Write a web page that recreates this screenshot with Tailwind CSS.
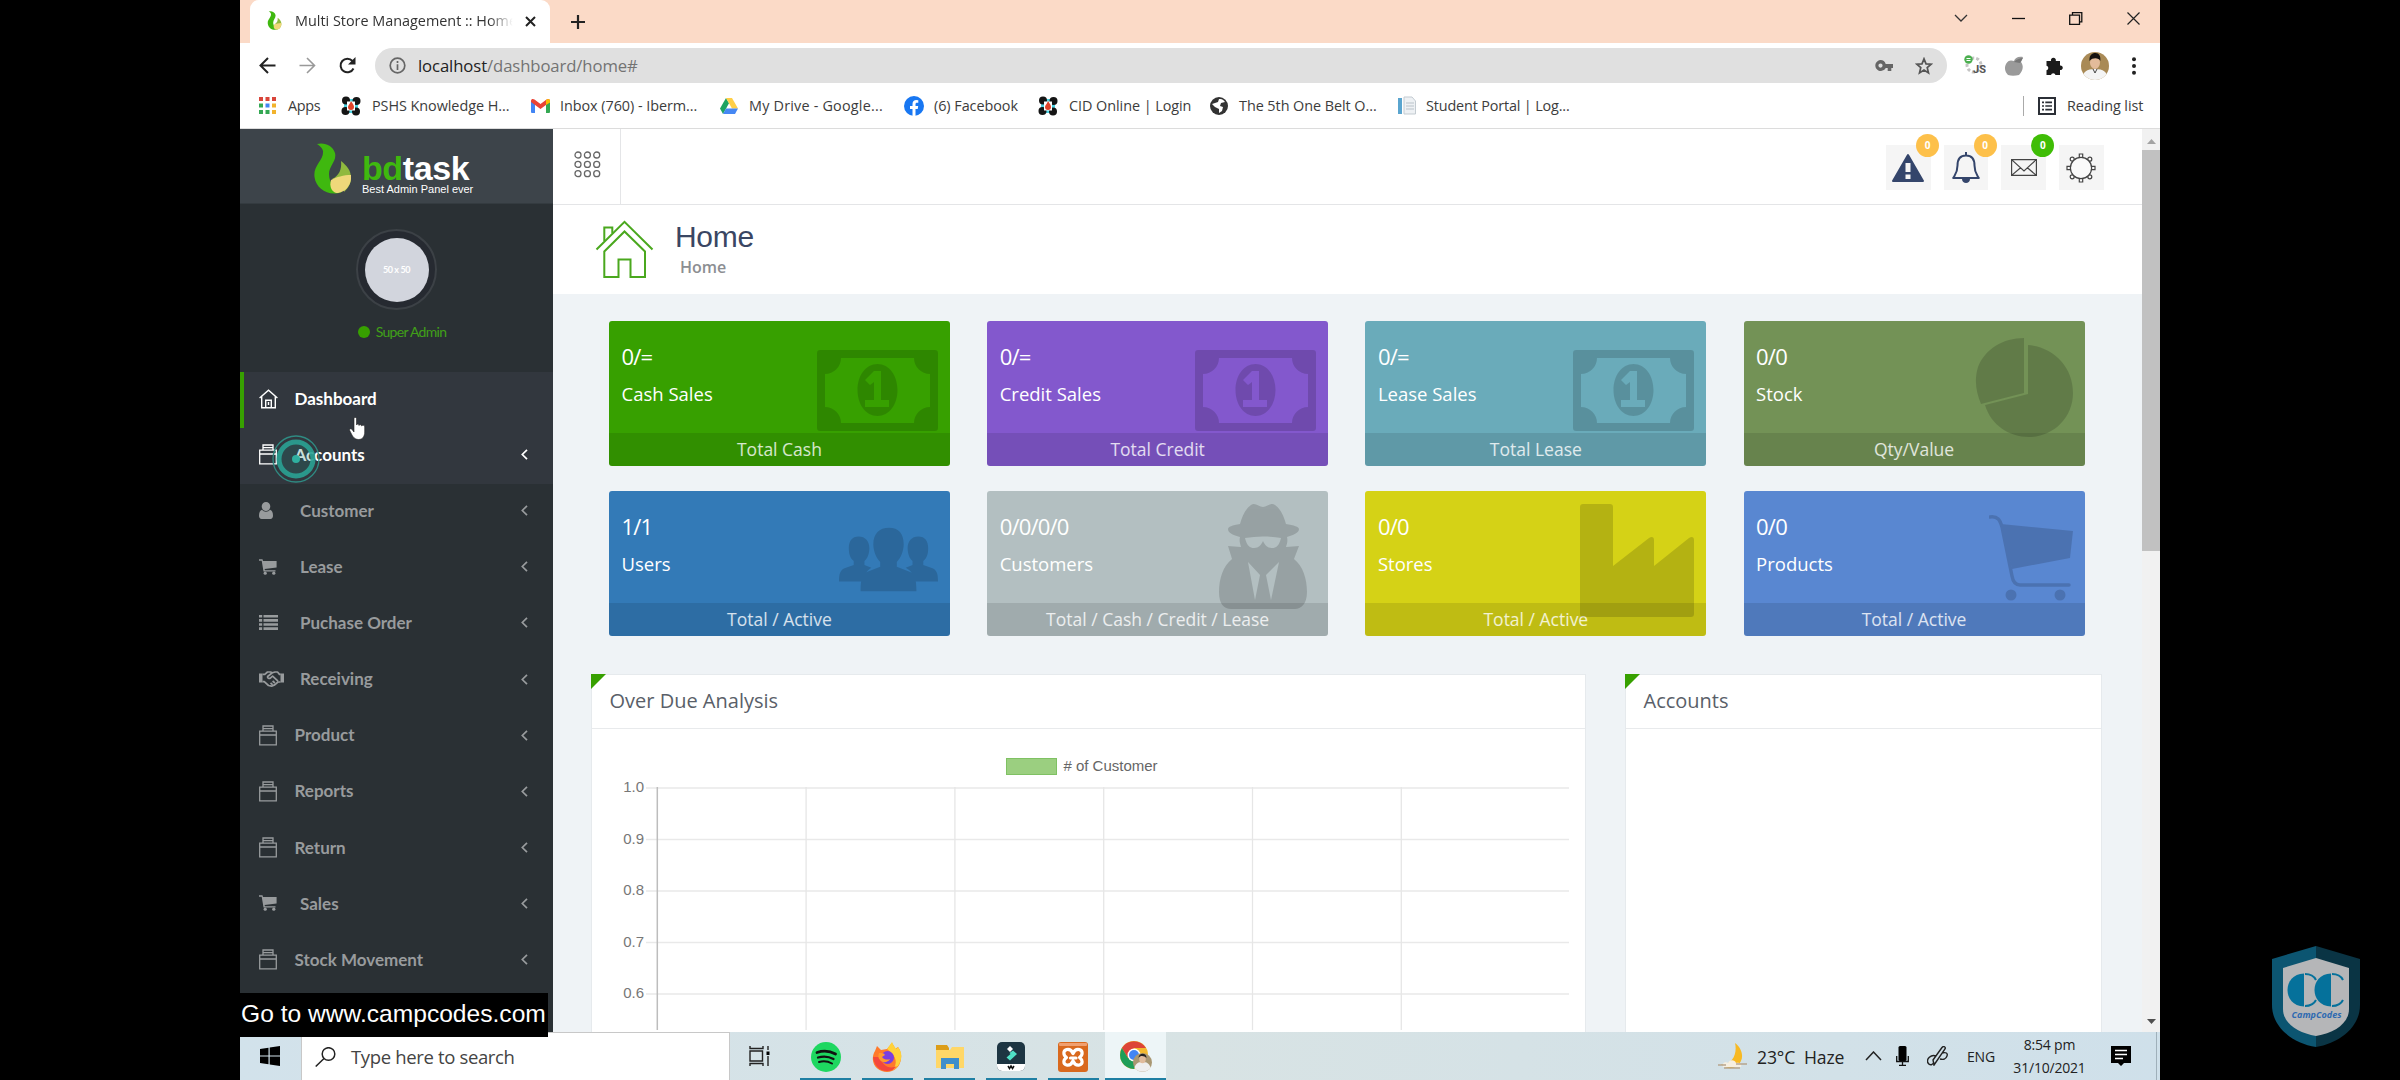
<!DOCTYPE html>
<html lang="en">
<head>
<meta charset="utf-8">
<title>Multi Store Management :: Home</title>
<script src="https://cdn.jsdelivr.net/npm/@tailwindcss/browser@4"></script>
</head>
<body class="bg-black">
<!-- shared symbols -->
<svg class="hidden">
  <symbol id="flame" viewBox="0 0 37 51"><path d="M3 1c8-2 16 2 18 9 2 8-6 13-6 21 0 9 6 16 13 18C15 54 2 46 .5 34-1 22 10 17 9 8 8.500 5 6 3 3 1z" fill="#3fb80f"/><path d="M27 18c6 5 10 9 10 17 0 6-3 10-7 14 0-7-3-12-12-13 7-3 10-10 9-18z" fill="#8fb93e"/><path d="M17 37c5-3 13-5 20-5 1 8-4 17-13 18-6 0-9-6-7-13z" fill="#efd87a"/></symbol>
  <symbol id="bag" viewBox="0 0 18 21"><g fill="none" stroke="currentColor" stroke-width="1.300"><path d="M.7 6.200h16.600v13.600H.7zM.7 10h16.600M4 6.200V1h10v5.200M4 3.700h10"/></g></symbol>
  <symbol id="house" viewBox="0 0 19 20"><g fill="none" stroke="currentColor" stroke-width="1.400"><path d="M.6 9 9.500 1.200 18.400 9M2.700 7.500v11.300h13.600V7.500M6.700 18.500v-7.200h5.600v7.200M9.500 13v3"/></g></symbol>
  <symbol id="person" viewBox="0 0 14 17"><path fill="currentColor" d="M7 0a4.300 4.300 0 0 1 4.300 4.300C11.300 7 9.500 9 7 9S2.700 7 2.700 4.300A4.300 4.300 0 0 1 7 0zM3 7.800C4 9 5.400 9.800 7 9.800S10 9 11 7.800c2 .4 3 3 3 6 0 2-1 3.200-2.600 3.200H2.600C1 17 0 15.800 0 13.800c0-3 1-5.600 3-6z"/></symbol>
  <symbol id="cartS" viewBox="0 0 18 16"><path fill="currentColor" d="M0 .3h3.500l.5 1.800h13.600v6.300L5.600 10l.3 1.200h10.600v1.400H4.500L2.700 1.700H0z"/><circle fill="currentColor" cx="6.200" cy="14.200" r="1.600"/><circle fill="currentColor" cx="14.800" cy="14.200" r="1.600"/></symbol>
  <symbol id="list" viewBox="0 0 19 15"><path fill="currentColor" d="M0 0h3.200v2.600H0zM4.500 0H19v2.600H4.500zM0 4.100h3.200v2.600H0zM4.500 4.100H19v2.600H4.500zM0 8.200h3.200v2.600H0zM4.500 8.200H19v2.600H4.500zM0 12.300h3.200V15H0zM4.500 12.300H19V15H4.500z"/></symbol>
  <symbol id="shake" viewBox="0 0 25 16"><path fill="currentColor" d="M0 2.500h3.500v9H0zM21.500 2.500H25v9h-3.500z"/><g fill="none" stroke="currentColor" stroke-width="1.700" stroke-linejoin="round"><path d="M3.500 3.400h2.300L8.500 1h3l2 .8L16 1h2.500l2 2.400h1.200M3.500 10.700h1.800l4.200 3.800 3 .6 3.200-1.200 3.300-2.900h2.500M13 2 8.600 5.500c-.5 1.800 1.700 2.500 3 1.300l2-1.600 5.400 5M11.500 12l2 1.600M13.600 10l2.300 2"/></g></symbol>
  <symbol id="chev" viewBox="0 0 7 11"><path d="M6 .8 1.300 5.500 6 10.200" fill="none" stroke="currentColor" stroke-width="1.700"/></symbol>
  <symbol id="money" viewBox="0 0 121 81"><path fill-rule="evenodd" d="M3 0h115a3 3 0 0 1 3 3v75a3 3 0 0 1-3 3H3a3 3 0 0 1-3-3V3a3 3 0 0 1 3-3zM24 8A16 16 0 0 1 8 24v33a16 16 0 0 1 16 16h73a16 16 0 0 1 16-16V24A16 16 0 0 1 97 8zM60.500 14c12 0 20 12 20 26s-8 26-20 26-20-12-20-26 8-26 20-26zM57 21l-9 9 5 5 4-3v18h-9v7h24v-7h-8V21z"/></symbol>
  <symbol id="pie" viewBox="0 0 98 99"><path d="M49 0v55L6 66C1 54-1 42 3 29 10 11 28 0 49 0zM53 7c26 2 45 22 45 48 0 25-20 44-44 44-20 0-38-12-44-32l43-11z"/></symbol>
  <symbol id="group" viewBox="0 0 101 65"><path d="M20 9c7 0 11 5 11 12 0 5-2 11-5 13v4l7 3c-5 3-7 7-7 13v1H0c0-8 1-12 7-14l8-3v-4c-4-3-5-8-5-13 0-7 3-12 10-12zM81 9c7 0 10 5 10 12 0 5-1 10-5 13v4l8 3c6 2 7 6 7 14H76c0-7-2-11-8-14l7-3v-4c-3-2-5-8-5-13 0-7 4-12 11-12z"/><path d="M51 0c10 0 15 6 15 17 0 7-3 14-7 18v5l13 5c5 2 7 6 7 20H22c0-14 2-18 7-20l13-5v-5c-4-4-7-11-7-18C35 6 41 0 51 0z"/></symbol>
  <symbol id="spy" viewBox="0 0 89 105"><path fill-rule="evenodd" d="M32 1c4-3 8 2 12 2s8-5 12-2c6 4 9 12 11 19 8 1 13 3 13 5 0 4-6 6-12 8 1 4 0 7-1 10l13-1-5 13c9 7 13 20 13 33 0 12-6 17-12 17H12C5 105 0 100 0 88c0-13 4-26 13-33L9 42l13 1c-1-4-2-6-1-10-7-2-12-4-12-8 0-2 4-4 12-5 2-7 5-15 11-19zM26 34c2 8 5 10 9 10 5 0 7-3 9-7 2 4 4 7 9 7 4 0 7-2 9-10-12-2-24-2-36 0zM29 58l7 38 5-25zM60 58l-8 38-5-25z"/></symbol>
  <symbol id="factory" viewBox="0 0 114 113"><path d="M3 0h27a3 3 0 0 1 3 3v59l36-28c3-2 5-1 5 2v26l35-28c3-2 5-1 5 2v74a3 3 0 0 1-3 3H3a3 3 0 0 1-3-3V3a3 3 0 0 1 3-3z"/></symbol>
  <symbol id="cartL" viewBox="0 0 84 86"><path d="M12 9 84 16l-3 27-58 11z"/><path d="M1 2c8-1 10 3 12 10l10 49c1 6 3 9 8 9h49" fill="none" stroke="#000" stroke-width="3.500" stroke-linecap="round"/><circle cx="22" cy="80" r="5.500"/><circle cx="71" cy="80" r="5.500"/></symbol>
  <symbol id="dost" viewBox="0 0 20 20"><g fill="#4fd4e4"><rect x="3" y="3" width="14" height="14"/></g><g fill="#151515"><circle cx="5" cy="4.500" r="4"/><circle cx="15.500" cy="5" r="4"/><circle cx="4.500" cy="15" r="4"/><circle cx="15" cy="15.500" r="4"/></g><path fill="#fff" d="M6 5.500h8v9H6z"/><path fill="#e0432a" d="M10 5c2 3 3 4 3 6s-1 3-3 3-3-1-3-3 2-3 3-6z"/></symbol>
</svg>

<div class="relative ml-[240px] w-[1920px] h-[1080px] flex flex-col overflow-hidden bg-white font-['Open_Sans',sans-serif]">

  <!-- tab strip -->
  <div class="h-[43px] shrink-0 bg-[#fbdac7] flex items-center pl-[10px]">
    <div class="w-[300px] h-[43px] bg-white rounded-t-[9px] flex items-center pl-[17px] pr-[14px]">
      <svg class="w-[15px] h-[19px] shrink-0 -mt-0.5"><use href="#flame"/></svg>
      <div class="ml-[13px] w-[220px] shrink-0 overflow-hidden whitespace-nowrap text-[14.400px] pb-0.5 text-[#333] [mask-image:linear-gradient(to_right,#000_88%,transparent_99%)]">Multi Store Management :: Home</div>
      <svg class="ml-[10px] w-[11px] h-[11px] shrink-0" viewBox="0 0 11 11"><path d="M1 1l9 9M10 1l-9 9" stroke="#222" stroke-width="2"/></svg>
    </div>
    <svg class="ml-[20px] w-[16px] h-[16px]" viewBox="0 0 16 16"><path d="M8 1v14M1 8h14" stroke="#222" stroke-width="2.200"/></svg>
    <div class="ml-auto flex items-center pr-[20px] pb-[6px] gap-[44px]">
      <svg class="w-[14px] h-[13px]" viewBox="0 0 14 13"><path d="M1 3l6 6 6-6" fill="none" stroke="#333" stroke-width="1.300"/></svg>
      <svg class="w-[13px] h-[13px]" viewBox="0 0 13 13"><path d="M0 6.500h13" stroke="#111" stroke-width="1.300"/></svg>
      <svg class="w-[14px] h-[13px]" viewBox="0 0 14 13"><path d="M.7 3.200h9.800v9.100H.7zM3.500 3V.7h9.300v9.100h-2.300" fill="none" stroke="#111" stroke-width="1.300"/></svg>
      <svg class="w-[13px] h-[13px]" viewBox="0 0 13 13"><path d="M.5.500l12 12M12.500.500l-12 12" stroke="#222" stroke-width="1.200"/></svg>
    </div>
  </div>

  <!-- toolbar -->
  <div class="h-[45px] shrink-0 flex items-center pl-[19px] pr-[20px]">
    <svg class="w-[17px] h-[17px]" viewBox="0 0 17 17"><path d="M16.500 8.500H2M9 1 1.500 8.500 9 16" fill="none" stroke="#222" stroke-width="2"/></svg>
    <svg class="ml-[23px] w-[17px] h-[17px]" viewBox="0 0 17 17"><path d="M.5 8.500H15M8 1l7.500 7.500L8 16" fill="none" stroke="#999" stroke-width="1.600"/></svg>
    <svg class="ml-[23px] w-[17px] h-[17px]" viewBox="0 0 17 17"><path d="M14.500 11.500A6.800 6.800 0 1 1 13.500 4" fill="none" stroke="#222" stroke-width="2"/><path d="M16.500 0v7.500H9z" fill="#222"/></svg>
    <div class="ml-[19px] w-[1572px] h-[35px] rounded-full bg-[#e0e0e0] flex items-center pl-[14px] pr-[14px]">
      <svg class="w-[17px] h-[17px]" viewBox="0 0 17 17"><circle cx="8.500" cy="8.500" r="7.300" fill="none" stroke="#666" stroke-width="1.700"/><path d="M8.500 7.300V13M8.500 4v2" stroke="#666" stroke-width="1.700"/></svg>
      <div class="ml-[12px] text-[16.700px] tracking-[-0.1px] text-[#737373]"><span class="text-[#222]">localhost</span>/dashboard/home#</div>
      <svg class="ml-auto w-[18px] h-[12px]" viewBox="0 0 18 12"><path fill="#666" fill-rule="evenodd" d="M5.500 0a5.500 5.500 0 0 1 5.200 4H18v4h-1.700v3h-3.600V8h-2A5.500 5.500 0 1 1 5.500 0zm0 3.500a2 2 0 1 0 0 4.200 2 2 0 0 0 0-4.200z"/></svg>
      <svg class="ml-[22px] w-[18px] h-[18px]" viewBox="0 0 24 24"><path fill="none" stroke="#555" stroke-width="2.300" d="m12 2.500 2.700 6.600 7 .5-5.400 4.600 1.700 7L12 17.400l-6 3.800 1.700-7L2.300 9.600l7-.5z"/></svg>
    </div>
    <svg class="ml-[17px] w-[22px] h-[21px]" viewBox="0 0 22 21"><circle cx="10" cy="10" r="7" fill="none" stroke="#c4c4c4" stroke-width="3" stroke-dasharray="3 2"/><circle cx="4.500" cy="4.500" r="4.200" fill="#4caf50"/><path d="M2.500 5.500h4M2.500 3.500h4" stroke="#fff"/><text x="9" y="18" font-family="Roboto" font-weight="700" font-size="11" fill="#555">JS</text></svg>
    <svg class="ml-[19px] w-[19px] h-[20px]" viewBox="0 0 19 20"><path fill="#9a9a9a" d="M1 8c2-4 5-4 8-3 1-3 4-5 9-4l-2 5c3 4 2 9-2 13-4 1-8 1-11 0C0 16-1 12 1 8z"/><path fill="#777" d="M9 6c3-3 6-4 9-4l-3 5z"/></svg>
    <svg class="ml-[21px] w-[19px] h-[18px]" viewBox="0 0 19 18"><path fill="#1b1b1b" d="M1.500 4H6a2.500 2.500 0 1 1 4.800 0H15v4.500a2.300 2.300 0 1 1 0 4.500v5H10.500a2.300 2.300 0 0 0-4.500 0H1.500v-4.800a2.300 2.300 0 0 0 0-4.500z"/></svg>
    <svg class="ml-[17px] w-[28px] h-[28px]" viewBox="0 0 28 28"><defs><clipPath id="av"><circle cx="14" cy="14" r="14"/></clipPath></defs><g clip-path="url(#av)"><rect width="28" height="28" fill="#a98a56"/><path d="M1 28c0-8 5-11 13-11s13 3 13 11z" fill="#f4f4f4"/><ellipse cx="14" cy="10.500" rx="5" ry="6.500" fill="#e3bb9a"/><path d="M8.500 9C8 2 12 1 14.500 1 18 1 20 4 19.300 9 18 6 12 5 8.500 9z" fill="#16120f"/><path d="M12 17l2 4 2-4" stroke="#444" fill="none"/></g></svg>
    <svg class="ml-auto mr-[4px] w-[4px] h-[18px]" viewBox="0 0 4 18"><g fill="#222"><circle cx="2" cy="2.200" r="2"/><circle cx="2" cy="9" r="2"/><circle cx="2" cy="15.800" r="2"/></g></svg>
  </div>

  <!-- bookmarks -->
  <div class="h-[41px] pb-[5px] shrink-0 flex items-center pl-[19px] pr-[17px] border-b border-[#dcdcdc] text-[14.400px] tracking-[-0.05px] text-[#3c3c3c] whitespace-nowrap">
    <svg class="w-[17px] h-[17px]" viewBox="0 0 17 17"><path fill="#d9453a" d="M0 0h4v4H0zM6.500 0h4v4h-4zM13 0h4v4h-4z"/><path fill="#34a853" d="M0 6.500h4v4H0zM0 13h4v4H0zM6.500 13h4v4h-4z"/><path fill="#4285f4" d="M6.500 6.500h4v4h-4z"/><path fill="#f2b32c" d="M13 6.500h4v4h-4zM13 13h4v4h-4z"/></svg>
    <span class="ml-[12px] w-[53px] tracking-[-0.3px]">Apps</span>
    <svg class="w-[20px] h-[20px]"><use href="#dost"/></svg>
    <span class="ml-[11px] w-[159px]">PSHS Knowledge H...</span>
    <svg class="w-[19px] h-[14px]" viewBox="0 0 19 14"><path fill="#4285f4" d="M0 2h4v12H1a1 1 0 0 1-1-1z"/><path fill="#34a853" d="M15 2h4v11a1 1 0 0 1-1 1h-3z"/><path fill="#ea4335" d="M0 2C0 0 2-.5 3.500.600L9.500 5l6-4.400C17 -.5 19 0 19 2v1L9.500 10 0 3z"/><path fill="#fbbc04" d="M15 1l1.500-.8C18-.2 19 .5 19 2v1.500L15 6z"/></svg>
    <span class="ml-[10px] w-[160px]">Inbox (760) - Iberm...</span>
    <svg class="w-[18px] h-[16px]" viewBox="0 0 18 16"><path fill="#1ea362" d="M6 0 0 10.500 3 16 9 5.300z"/><path fill="#ffcf48" d="M6 0h6l6 10.500h-6z"/><path fill="#4688f4" d="M3 16h12l3-5.500H6z"/></svg>
    <span class="ml-[11px] w-[155px] tracking-[0.2px]">My Drive - Google...</span>
    <svg class="w-[20px] h-[20px]" viewBox="0 0 20 20"><circle cx="10" cy="10" r="10" fill="#1877f2"/><path fill="#fff" d="M8.500 20v-7H6v-3h2.500V8c0-2.600 1.500-4 3.800-4l2 .2v2.500h-1.200c-1.300 0-1.600.7-1.600 1.600V10h2.700l-.5 3h-2.200v7z"/></svg>
    <span class="ml-[10px] w-[104px]">(6) Facebook</span>
    <svg class="w-[20px] h-[20px]"><use href="#dost"/></svg>
    <span class="ml-[11px] w-[141px]">CID Online | Login</span>
    <svg class="w-[18px] h-[18px]" viewBox="0 0 18 18"><circle cx="9" cy="9" r="9" fill="#333"/><path fill="#fff" d="M9 2c3-.5 5 1 6 3l-4 1-1 3 3 1-1 4-3 2 0-4-4-2-3-3 3-1 3-1z"/></svg>
    <span class="ml-[11px] w-[159px]">The 5th One Belt O...</span>
    <svg class="w-[18px] h-[19px]" viewBox="0 0 18 19"><path fill="#5aa5cf" d="M0 2h4v16H0z"/><path fill="#eef1f4" stroke="#c3cbd1" d="M6 1h8l3.500 4v13H6z"/><path stroke="#b9c2c9" d="M8 7h8M8 10h8M8 13h8"/></svg>
    <span class="ml-[10px] tracking-[-0.15px]">Student Portal | Log...</span>
    <div class="ml-auto w-px h-[20px] bg-[#aaa]"></div>
    <svg class="ml-[14px] w-[18px] h-[18px]" viewBox="0 0 18 18"><path fill="none" stroke="#2b2f36" stroke-width="2" d="M1 1h16v16H1z"/><path stroke="#2b2f36" stroke-width="1.700" d="M4 5.300h2M7.300 5.300H14M4 9h2M7.300 9H14M4 12.700h2M7.300 12.700H14"/></svg>
    <span class="ml-[11px] w-[76px]">Reading list</span>
  </div>

  <!-- page -->
  <div class="h-[903px] shrink-0 flex">
    <!-- sidebar -->
    <aside class="w-[313px] shrink-0 bg-[#2a3034] flex flex-col font-['Lato',sans-serif]">
      <div class="h-[75px] shrink-0 bg-[#3d444a] flex items-start pl-[74px] pt-[14px] border-b border-[#343b40]">
        <svg class="w-[37px] h-[51px]"><use href="#flame"/></svg>
        <div class="ml-[11px] pt-[8px] font-['Liberation_Sans',sans-serif] text-white whitespace-nowrap">
          <div class="text-[34px] leading-[34px] font-bold tracking-[-0.4px]"><span class="text-[#3fb80f]">bd</span>task</div>
          <div class="text-[11px] leading-[13px] -mt-[2px] font-medium">Best Admin Panel ever</div>
        </div>
      </div>
      <div class="h-[168px] shrink-0 flex flex-col items-center pt-[25px]">
        <div class="size-[81px] rounded-full border-2 border-[#3c4146] bg-[#262a31] flex items-center justify-center">
          <div class="size-[64px] rounded-full bg-[#d2d5dd] flex items-center justify-center text-white text-[9px] font-bold tracking-[-0.4px]">50 x 50</div>
        </div>
        <div class="mt-[11px] flex items-center gap-[6px] pl-[11px] text-[14px] leading-[22px] tracking-[-0.7px] text-[#41a018]"><span class="size-[12px] rounded-full bg-[#37a000]"></span><span>Super Admin</span></div>
      </div>
      <nav id="menu"></nav>
    </aside>

    <!-- main -->
    <main class="grow min-w-0 bg-[#eff3f6] flex flex-col">
      <div class="h-[76px] shrink-0 bg-white border-b border-[#e4e5e7] flex">
        <div class="w-[68px] border-r border-[#e4e5e7] flex items-start pl-[20.500px] pt-[22px]">
          <svg class="w-[27px] h-[27px]" viewBox="0 0 27 27"><g fill="none" stroke="#666" stroke-width="1.300"><circle cx="4" cy="4" r="3"/><circle cx="13.400" cy="4" r="3"/><circle cx="22.700" cy="4" r="3"/><circle cx="4" cy="13.400" r="3"/><circle cx="13.400" cy="13.400" r="3"/><circle cx="22.700" cy="13.400" r="3"/><circle cx="4" cy="22.700" r="3"/><circle cx="13.400" cy="22.700" r="3"/><circle cx="22.700" cy="22.700" r="3"/></g></svg>
        </div>
        <div class="ml-auto mr-[38.500px] pt-[16px] flex gap-[13px]">
          <div class="relative w-[44.600px] h-[45px] bg-[#f5f5f5] flex items-center justify-center">
            <svg class="w-[32px] h-[30px]" viewBox="0 0 32 30"><path fill="#34456b" stroke="#34456b" stroke-width="2" stroke-linejoin="round" d="M16 2 31 28H1z"/><path fill="#f5f5f5" d="M13.500 10h5v9h-5zM13.500 21.500h5v4.500h-5z"/></svg>
            <span class="absolute -top-[11px] left-[30px] size-[23px] rounded-full bg-[#fdc04a] text-white text-[10px] font-bold flex items-center justify-center">0</span>
          </div>
          <div class="relative w-[44.600px] h-[45px] bg-[#f5f5f5] flex items-center justify-center">
            <svg class="w-[28px] h-[31px]" viewBox="0 0 28 31"><path fill="none" stroke="#34456b" stroke-width="2" stroke-linejoin="round" d="M14 3.500c-6 0-8.500 4-8.500 10 0 7-2 8.500-4.300 12.500h25.600c-2.300-4-4.300-5.500-4.300-12.500 0-6-2.500-10-8.500-10zM14 0v3.500"/><path fill="#34456b" d="M10 27h8c0 2.500-2 4-4 4s-4-1.500-4-4z"/></svg>
            <span class="absolute -top-[11px] left-[30px] size-[23px] rounded-full bg-[#fdc04a] text-white text-[10px] font-bold flex items-center justify-center">0</span>
          </div>
          <div class="relative w-[44.600px] h-[45px] bg-[#f5f5f5] flex items-center justify-center">
            <svg class="w-[26px] h-[17px]" viewBox="0 0 26 17"><g fill="none" stroke="#444" stroke-width="1.200"><path d="M.6.600h24.800v15.800H.6zM.6.600 13 12 25.400.600M.6 16.400l9-7.600M25.400 16.400l-9-7.600"/></g></svg>
            <span class="absolute -top-[11px] left-[30px] size-[23px] rounded-full bg-[#3fbd06] text-white text-[10px] font-bold flex items-center justify-center">0</span>
          </div>
          <div class="w-[44.600px] h-[45px] bg-[#f5f5f5] flex items-center justify-center">
            <svg class="w-[30px] h-[30px]" viewBox="0 0 30 30"><g fill="#fafafa" stroke="#444" stroke-width="1.200"><path d="M13.300 5V1h3.400v4M13.300 25v4h3.400v-4M5 13.300H1v3.400h4M25 13.300h4v3.400h-4"/><circle cx="6.200" cy="6.200" r="2"/><circle cx="23.800" cy="6.200" r="2"/><circle cx="6.200" cy="23.800" r="2"/><circle cx="23.800" cy="23.800" r="2"/><circle cx="15" cy="15" r="10.600"/></g></svg>
          </div>
        </div>
      </div>
      <div class="h-[89px] shrink-0 bg-white flex pl-[42px] pt-[15px]">
        <svg class="w-[59px] h-[60px]" viewBox="0 0 59 60"><g fill="none" stroke="#4aa81e" stroke-width="2"><path d="M1.500 29.500 29.500 1.800l28 27.700"/><path d="M9.300 21V7.500h8v5.800"/><path d="M9.300 57V31.500L29.500 11.500 50 31.500V57H35.500V39.500h-12V57z"/></g></svg>
        <div class="ml-[21px]">
          <div class="mt-[-1px] h-[36px] font-['Liberation_Sans',sans-serif] text-[30px] leading-[36px] tracking-[-0.3px] text-[#3a4663]">Home</div>
          <div class="ml-[5px] text-[16px] leading-[24px] font-semibold text-[#8c8e92]">Home</div>
        </div>
      </div>
      <div id="cards" class="mt-[27px] ml-[56px] w-[1475.500px] grid grid-cols-4 gap-x-[37.300px] gap-y-[25px] shrink-0"></div>

      <div class="mt-[38px] ml-[37.500px] flex gap-[39px] grow items-stretch">
        <section class="relative w-[995px] bg-white border border-b-0 border-[#e6eaed]">
          <div class="absolute -left-px -top-px border-t-[15px] border-t-[#37a000] border-r-[15px] border-r-transparent"></div>
          <h4 class="h-[54px] border-b border-[#e8eaec] flex items-center pl-[18px] pb-[2px] text-[20px] text-[#5a5f69]">Over Due Analysis</h4>
          <div class="h-[38px] flex items-end justify-center pr-[12px] gap-[6px] font-['Liberation_Sans',sans-serif] text-[15px] text-[#666]">
            <span class="w-[51px] h-[17px] mb-[-8px] bg-[#9bcf80] border border-[#7fc163]"></span><span class="leading-[17px] mb-[-7px]"># of Customer</span>
          </div>
          <svg class="block w-[990px] h-[263px]" viewBox="0 0 990 263" id="chart"></svg>
        </section>
        <section class="relative w-[477px] bg-white border border-b-0 border-[#e6eaed]">
          <div class="absolute -left-px -top-px border-t-[15px] border-t-[#37a000] border-r-[15px] border-r-transparent"></div>
          <h4 class="h-[54px] border-b border-[#e8eaec] flex items-center pl-[18px] pb-[2px] text-[20px] text-[#5a5f69]">Accounts</h4>
        </section>
      </div>
    </main>

    <!-- scrollbar -->
    <div class="w-[18px] shrink-0 bg-[#f1f1f1] flex flex-col items-center">
      <svg class="mt-[10px] w-[9px] h-[5px]" viewBox="0 0 9 5"><path fill="#a3a3a3" d="M0 5 4.500 0 9 5z"/></svg>
      <div class="mt-[6px] w-[18px] h-[401px] bg-[#c1c1c1]"></div>
      <svg class="mt-auto mb-[8px] w-[9px] h-[5px]" viewBox="0 0 9 5"><path fill="#505050" d="M0 0h9L4.500 5z"/></svg>
    </div>
  </div>

  <!-- taskbar -->
  <footer class="h-[48px] shrink-0 bg-linear-to-r from-[#d2e2eb] via-[#d8e3e4] to-[#cfe0ea] flex items-stretch text-[#222]">
    <div class="w-[61px] flex items-center pl-[20px]"><svg class="w-[20px] h-[20px]" viewBox="0 0 20 20"><path d="M0 3l8.500-1.300v7.800H0zM9.700 1.500 20 0v9.500H9.700zM0 10.500h8.500v7.800L0 17zM9.700 10.500H20V20L9.700 18.500z"/></svg></div>
    <div class="w-[429px] bg-white border-t border-x border-[#c8c8c8] flex items-center pl-[13px]">
      <svg class="w-[21px] h-[20px]" viewBox="0 0 21 20"><circle cx="13.500" cy="7" r="6.300" fill="none" stroke="#222" stroke-width="1.500"/><path d="M9 11.500.7 19.500" stroke="#222" stroke-width="1.500"/></svg>
      <span class="ml-[15px] text-[18.500px] tracking-[-0.35px] text-[#444]">Type here to search</span>
    </div>
    <div class="w-[61px] ml-[9px] flex items-center pl-[10px]"><svg class="w-[21px] h-[20px]" viewBox="0 0 21 20"><g fill="none" stroke="#222" stroke-width="1.400"><path d="M1 0v2.500h13V0M1 5h12.500v10H1zM1 20v-2.500h13V20M19 0v4M19 10v10"/></g><path d="M17.500 5.500h3v3.500h-3z"/></svg></div>
    <div class="w-[51px] flex items-center justify-center pt-[3px] border-b-2 border-[#1f7fa3]"><svg class="w-[30px] h-[30px]" viewBox="0 0 30 30"><circle cx="15" cy="15" r="15" fill="#1ed760"/><g fill="none" stroke="#111" stroke-linecap="round"><path d="M6 10.500c6-2 13-1.500 18.500 1.500" stroke-width="2.800"/><path d="M7 15.500c5-1.500 11-1 15.500 1.500" stroke-width="2.300"/><path d="M8 20c4-1.200 9-.8 13 1.500" stroke-width="2"/></g></svg></div>
    <div class="ml-[11px] w-[51px] flex items-center justify-center pt-[3px] border-b-2 border-[#1f7fa3]"><svg class="w-[30px] h-[30px] -ml-0.5" viewBox="0 0 30 30"><path fill="#ff7a2b" d="M3 9l2-5 4 4 6-1 5-6c1 2 3 4 3 6l3-2c3 4 3.500 8 3 12-1 8-7 13-14 13S1 25 .8 17c0-3 .7-6 2.200-8z"/><path fill="#ffd23a" d="M15 7l5-7c1 3 3 5 4 7l2-2c3 4 4 8 3 12-1 5-4 9-8 11 4-6 5-13-6-21z"/><path fill="#f4483c" d="M1 15c1 8 6 14 14 14 4 0 8-2 10-5-8 4-15-1-17-9z"/><circle cx="15.500" cy="15.500" r="6.500" fill="#7a3fe0"/><path fill="#ff9a2e" d="M7 11c3 0 5 0 6 2l-3 2c2 3 6 3 8 2-2 4-8 4-10 1-2-2-2-4-1-7z"/></svg></div>
    <div class="ml-[11px] w-[51px] flex items-center justify-center pt-[3px] border-b-2 border-[#1f7fa3]"><svg class="w-[28px] h-[24px]" viewBox="0 0 28 24"><path fill="#dc9d18" d="M0 0h11l2 3v4H0z"/><path fill="#ffd767" d="M0 5h14l2-3h12v21H0z"/><path fill="#3f8fcb" d="M5 24V13h18v11h-5v-5h-8v5z"/></svg></div>
    <div class="ml-[11px] w-[51px] flex items-center justify-center pt-[3px] border-b-2 border-[#1f7fa3]"><svg class="w-[28px] h-[29px] -ml-0.5" viewBox="0 0 28 29"><rect width="28" height="29" rx="5" fill="#1d3542"/><path fill="#fff" d="M0 22h28v2a5 5 0 0 1-5 5H5a5 5 0 0 1-5-5z"/><path fill="#fff" d="M13 4l3 3-3 3-3-3z"/><path fill="#4fe0c6" d="M16 8.500l4 3.500-7 6.500-3.500-3 4-3.500-1-1z"/><path fill="none" stroke="#111" stroke-width="1.500" d="M11 24l1.500 2.500L14 24l1.500 2.500L17 24"/></svg></div>
    <div class="ml-[11px] w-[51px] flex items-center justify-center pt-[3px] border-b-2 border-[#1f7fa3]"><svg class="w-[30px] h-[30px] -ml-0.5" viewBox="0 0 30 30"><rect width="30" height="30" rx="3" fill="#d9691e"/><rect x="1" y="1" width="28" height="3" rx="1" fill="#f0a070"/><path fill="none" stroke="#fff" stroke-width="3.200" stroke-linejoin="round" stroke-linecap="round" d="M12.500 16H18M15 11.500C13.500 8 11 7 8.500 7.600 5 8.500 5 13 8.500 15.500 5 18 5 22 8.500 23c2.500.6 5-.5 6.500-4 1.500 3.500 4 4.600 6.500 4 3.500-1 3.500-5 0-7.500 3.500-2.500 3.500-7 0-7.900-2.500-.6-5 .4-6.500 3.900z"/></svg></div>
    <div class="ml-[6px] w-[61px] flex items-center justify-center pt-[3px] bg-[#edf5f7] border-b-2 border-[#1f7fa3]"><svg class="w-[32px] h-[31px]" viewBox="0 0 32 31"><circle cx="14" cy="14" r="14" fill="#f2b82e"/><path fill="#dd4437" d="M1.900 7A14 14 0 0 1 26 7H14z"/><path fill="#dd4437" d="M1.900 7 8 17l6-10z"/><path fill="#1e9e58" d="M1.900 7A14 14 0 0 0 14 28l6-10-12-1z"/><circle cx="14" cy="14" r="6.500" fill="#fff"/><circle cx="14" cy="14" r="5" fill="#4285f4"/><circle cx="22.500" cy="21.500" r="9.500" fill="#a99772"/><path fill="#eee" d="M14.500 27c1-5 4-6 8-6s7 1 8 6c-4 5-12 5-16 0z"/><ellipse cx="22.500" cy="18" rx="3.300" ry="4.200" fill="#e0bb9c"/><path fill="#222" d="M18.500 17c0-5 8-6 8 0-2-2-6-3-8 0z"/></svg></div>
    <!-- tray -->
    <div class="ml-[552px] flex items-center">
      <svg class="w-[29px] h-[26px]" viewBox="0 0 29 26"><path fill="#f7b923" d="M17 0c8 6 10 17 2 23-6 4-13 2-16-2 9 2 17-8 14-21z"/><path fill="#f6efe0" d="M5 24c-2-4 3-6 5-4 2-4 7-3 8 0 4-1 6 2 5 4z"/><path stroke="#b7a58f" stroke-width="1.500" d="M0 22h8M18 21h11M6 25h16"/></svg>
      <span class="ml-[10px] w-[108px] pt-[2px] text-[17.600px] tracking-[-0.15px] whitespace-pre">23°C  Haze</span>
      <svg class="w-[17px] h-[10px]" viewBox="0 0 17 10"><path d="M1 9l7.500-8L16 9" fill="none" stroke="#222" stroke-width="1.500"/></svg>
      <svg class="ml-[14px] w-[13px] h-[20px]" viewBox="0 0 13 20"><rect x="2.500" y="0" width="8" height="15" rx="1.500"/><path d="M.7 10v5.500h11.600V10M6.500 15.500V19M3 19.300h7" fill="none" stroke="#111" stroke-width="1.300"/></svg>
      <svg class="ml-[18px] w-[21px] h-[20px]" viewBox="0 0 21 20"><g fill="none" stroke="#222" stroke-width="1.400"><path d="M7 19 18 3c1-2-1.500-3.500-3-1.500L6 14zM9 10C4 8-1 13 1 17c2 3 5 2 6-1M15 7c4-1 6 0 5 3s-4 4-7 3"/></g></svg>
      <span class="ml-[19px] w-[45px] text-[14px] tracking-[-0.2px]">ENG</span>
      <div class="w-[75px] flex flex-col items-center text-[14px] leading-[23px] tracking-[-0.2px] whitespace-nowrap"><span>8:54 pm</span><span>31/10/2021</span></div>
      <svg class="ml-[24px] w-[20px] h-[20px]" viewBox="0 0 20 20"><path d="M0 0h20v17h-7l-3 3-3-3H0z"/><path d="M4 4.500h12M4 8.500h12M4 12.500h8" stroke="#fff" stroke-width="1.500"/></svg>
      <div class="ml-[25px] w-px h-[48px] bg-[#9fb0ba]"></div>
    </div>
  </footer>

  <!-- click ring, hand cursor and caption strip lie over the page -->
  <svg class="absolute left-[31px] top-[434px] w-[50px] h-[50px]" viewBox="0 0 50 50"><circle cx="25" cy="25" r="17" fill="#1e7c74" fill-opacity=".25" stroke="#2aa294" stroke-width="5" stroke-opacity=".9"/><circle cx="25" cy="25" r="23" fill="none" stroke="#2f8a82" stroke-width="1.300"/><circle cx="25" cy="25" r="4" fill="#2fb0a0"/></svg>
  <svg class="absolute left-[109px] top-[417px] w-[17px] h-[23px]" viewBox="0 0 17 23"><path fill="#fff" stroke="#222" stroke-width=".6" d="M5 1.500C5 0 7.500 0 7.500 1.500V8c.5-1.500 2.500-1 2.500.5.500-1.300 2.500-1 2.700.5.500-1 2.800-1 3 .8V15c0 4-2 7.500-6 7.500-5 0-6.500-4-9-9C0 12 2 11 3 12.500L5 15z"/></svg>
  <div class="absolute left-0 top-[993px] w-[308px] h-[44px] bg-black text-white font-['Liberation_Sans',sans-serif] text-[24.600px] flex items-center pl-px pb-px whitespace-nowrap">Go to www.campcodes.com</div>
</div>

<!-- channel shield in the right margin -->
<svg class="absolute left-[2271px] top-[945px] w-[90px] h-[103px]" viewBox="0 0 90 103"><path fill="#0c5571" d="M45 1 1 14v46c0 22 20 38 44 42z"/><path fill="#0a3444" d="M45 1l44 13v46c0 22-20 38-44 42z"/><path fill="#b5b6b8" d="M45 13 12 23v41c0 14 14 24 33 27 19-3 33-13 33-27V23z"/><g fill="#05719b"><path d="M33 28.500C11 29 11 61 33 61.500z"/><path d="M60 28.500C38 29 38 61 60 61.500z"/></g><g fill="none" stroke="#05719b" stroke-width="2"><path d="M34 29c5 0 9 2 11 6M34 61c5 0 9-2 11-6M61 29c5 0 9 2 11 6M61 61c5 0 9-2 11-6"/></g><text x="45.500" y="73" text-anchor="middle" textLength="50" lengthAdjust="spacingAndGlyphs" font-family="Open Sans" font-style="italic" font-weight="700" font-size="9" fill="#2e6ab1">CampCodes</text></svg>

<script>
const items = [
  ['house','w-[19px] h-[20px]','Dashboard',0,'on'],['bag','w-[18px] h-[21px]','Accounts',0,'open'],
  ['person','w-[14px] h-[17px]','Customer',1],['cartS','w-[18px] h-[16px]','Lease',1],['list','w-[19px] h-[15px]','Puchase Order',1],
  ['shake','w-[25px] h-[16px]','Receiving',1],['bag','w-[18px] h-[21px]','Product',0],['bag','w-[18px] h-[21px]','Reports',0],
  ['bag','w-[18px] h-[21px]','Return',0],['cartS','w-[18px] h-[16px]','Sales',1],['bag','w-[18px] h-[21px]','Stock Movement',0]];
document.getElementById('menu').innerHTML = items.map(([ic,sz,t,fa,st]) => `
  <a class="h-[56.100px] flex items-center border-l-4 pl-[15px] pr-[25.500px] pb-[3px] text-[17px] font-bold ${st==='on'?'border-[#37a000]':'border-transparent'} ${st?'bg-[#32373e] text-white':'text-[#989b9d]'}">
    <span class="${fa?'w-[41px]':'w-[35.500px]'} flex shrink-0"><svg class="${sz}"><use href="#${ic}"/></svg></span>
    <span class="whitespace-nowrap">${t}</span>
    ${st==='on'?'':'<svg class="ml-auto w-[7px] h-[11px]"><use href="#chev"/></svg>'}
  </a>`).join('');

const cards = [
  ['#37a000','0/=','Cash Sales','Total Cash','money','right-[12px] top-[29px] w-[121px] h-[81px]'],
  ['#8358cd','0/=','Credit Sales','Total Credit','money','right-[12px] top-[29px] w-[121px] h-[81px]'],
  ['#6aabba','0/=','Lease Sales','Total Lease','money','right-[12px] top-[29px] w-[121px] h-[81px]'],
  ['#739256','0/0','Stock','Qty/Value','pie','right-[12px] top-[17px] w-[98px] h-[99px]'],
  ['#337ab7','1/1','Users','Total / Active','group','right-[12px] top-[36px] w-[99px] h-[65px]'],
  ['#b3bfc1','0/0/0/0','Customers','Total / Cash / Credit / Lease','spy','right-[20px] top-[13px] w-[89px] h-[105px]'],
  ['#d5d216','0/0','Stores','Total / Active','factory','right-[12px] top-[13px] w-[114px] h-[113px]'],
  ['#5987d1','0/0','Products','Total / Active','cartL','right-[12px] top-[24px] w-[84px] h-[86px]']];
document.getElementById('cards').innerHTML = cards.map(([c,n,l,f,ic,pos]) => `
  <div class="relative h-[145px] rounded-[3px] overflow-hidden flex flex-col text-white" style="background:${c}">
    <div class="pl-[12.500px] pt-[20px] text-[22px] leading-[30px] tracking-[-0.8px]">${n}</div>
    <div class="pl-[12.500px] mt-[10px] text-[18.500px] leading-[26px]">${l}</div>
    <div class="mt-auto h-[33px] bg-black/10 flex items-center justify-center text-[17.500px] text-white/80">${f}</div>
    <svg class="absolute ${pos} opacity-15"><use href="#${ic}"/></svg>
  </div>`).join('');

let g = '';
['1.0','0.9','0.8','0.7','0.6'].forEach((t,i) => { const y = 21 + i*51.5;
  g += `<path d="M54 ${y}H977" stroke="#e9e9e9" stroke-width="1.300"/><text x="52" y="${y+4}" text-anchor="end" font-family="Liberation Sans" font-size="15" fill="#777">${t}</text>`; });
for (let i=1;i<6;i++) g += `<path d="M${65.300+i*148.800} 20V263" stroke="#e6e6e6" stroke-width="1.300"/>`;
g += '<path d="M65.300 20V263" stroke="#bdbdbd" stroke-width="1.500"/>';
document.getElementById('chart').innerHTML = g;
</script>
</body>
</html>
